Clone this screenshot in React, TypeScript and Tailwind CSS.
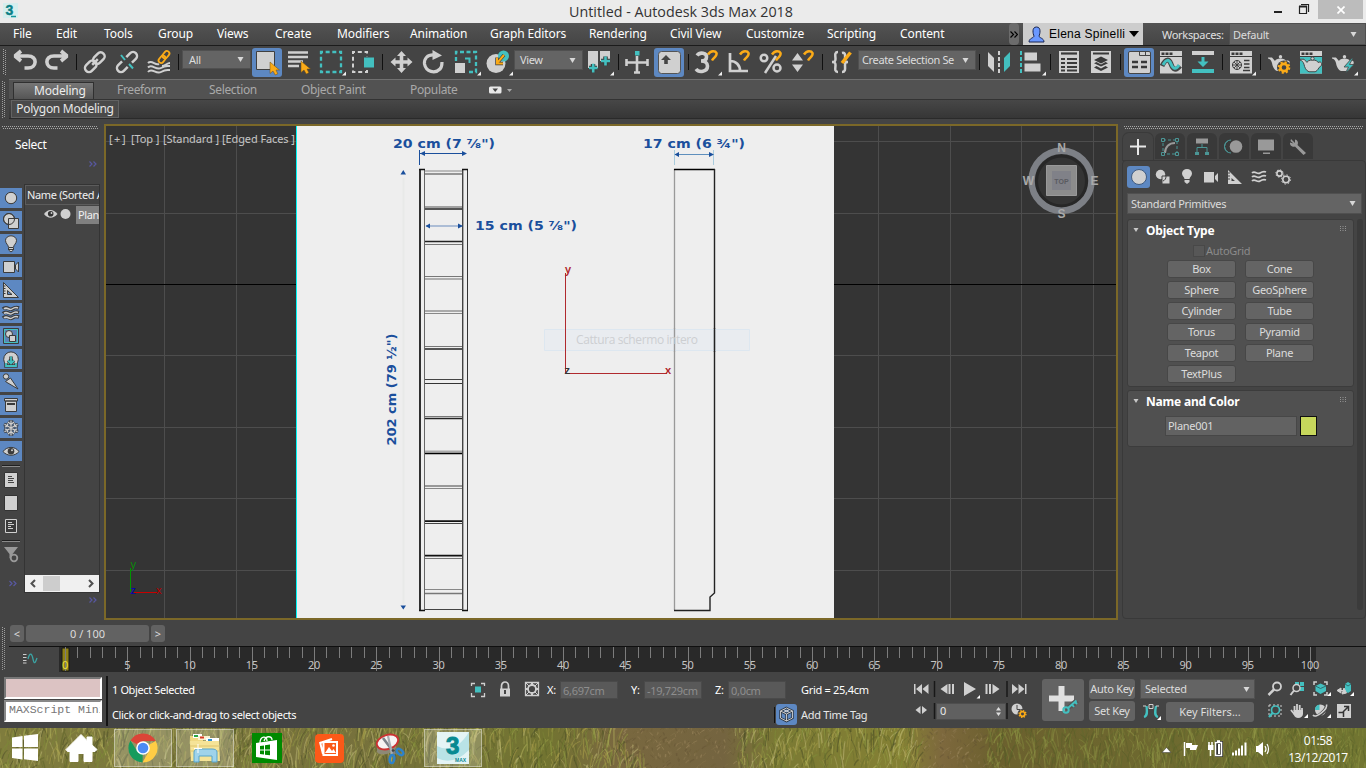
import React from "react";

const L = "#d0d0d0";
const T = "#43c0c0";
const O = "#fbab18";
const D = "#3a3a3a";

type IcoProps = { w?: number; h?: number; children?: React.ReactNode; className?: string };

function Ico({ w = 32, h = 32, children, className = "" }: IcoProps) {
  return (
    <svg width={w} height={h} viewBox={`0 0 ${w} ${h}`} className={`block shrink-0 ${className}`} fill="none">
      {children}
    </svg>
  );
}

function GripV({ h, className = "" }: { h: number; className?: string }) {
  return (
    <Ico w={4} h={h} className={className}>
      <path d={`M0.500 0V${h}`} stroke="#a0a0a0" strokeDasharray="1 1" />
      <path d={`M2.500 1V${h}`} stroke="#a0a0a0" strokeDasharray="1 1" />
    </Ico>
  );
}

function GripH({ w, className = "" }: { w: number; className?: string }) {
  return (
    <Ico w={w} h={3} className={className}>
      <path d={`M0 0.500H${w}`} stroke="#a8a8a8" strokeDasharray="1 1" />
      <path d={`M1 2.500H${w}`} stroke="#a8a8a8" strokeDasharray="1 1" />
    </Ico>
  );
}

function Slot({ children, active = false, corner = false }: { children: React.ReactNode; active?: boolean; corner?: boolean }) {
  return (
    <div className={active ? "mx-px mt-px h-[29px] w-[30px] shrink-0 overflow-hidden rounded-[3px] bg-[#5d88c2]" : "h-[30px] w-8 shrink-0"}>
      <svg width={active ? 30 : 32} height="30" viewBox={active ? "1 2 30 30" : "0 1 32 30"} fill="none" className="block">
        {children}
        {corner && <path d="M31 25.500V29.500H27Z" fill="#f0f0f0" />}
      </svg>
    </div>
  );
}

function Sep({ className = "w-[7px]" }: { className?: string }) {
  return (
    <div className={`mt-[7px] flex shrink-0 justify-center ${className}`}>
      <div className="h-4 w-px bg-[#101010]" />
    </div>
  );
}

function Combo({ text, className = "", pad = "px-1.5" }: { text: string; className?: string; pad?: string }) {
  return (
    <div className={`flex shrink-0 items-center justify-between border border-[#505050] bg-[#646464] text-[#dcdcdc] ${pad} ${className}`}>
      <span className="whitespace-nowrap">{text}</span>
      <Ico w={7} h={5}>
        <path d="M0.500 0H6.500L3.500 5Z" fill="#d8d8d8" />
      </Ico>
    </div>
  );
}

const Cursor = ({ x, y }: { x: number; y: number }) => (
  <path transform={`translate(${x} ${y})`} d="M0 0V11.500L3 9L5.200 13L7.800 11.800L6 8H9.500Z" fill={O} stroke="#6b4d16" strokeWidth=".5" />
);
const Magnet = ({ x, y }: { x: number; y: number }) => (
  <path transform={`translate(${x} ${y})`} d="M1 4.500C4 0 8.500 1 9.500 3C10.500 6 7 7 5 10.500" stroke={O} strokeWidth="2.500" />
);
const Teapot = ({ fill = L, stroke = "none" }: { fill?: string; stroke?: string }) => (
  <g fill={fill} stroke={stroke}>
    <path d="M5 11.500H9L12 15C12.500 11.500 22.500 11.500 23 15C27 13 28.500 18 24 20.500C23 23 21 25 20 25H14C11 24 9.500 20 9 17C8 14 7 13 5 12.500Z" />
    <circle cx="17.500" cy="10.800" r="1.700" />
  </g>
);
const Gear = ({ x, y, s = 1, color = O }: { x: number; y: number; s?: number; color?: string }) => (
  <g transform={`translate(${x} ${y}) scale(${s})`}>
    <circle r="5.300" stroke={color} strokeWidth="2" strokeDasharray="2.100 2.060" />
    <circle r="3.600" stroke={color} strokeWidth="2.600" />
  </g>
);
const Waves = ({ color = L, o = "" }: { color?: string; o?: string }) => (
  <path
    d="M1 4C4 1 6 6 9 4S13 2 15 3M1 8C4 5 6 10 9 8S13 6 15 7M1 12C4 9 6 14 9 12S13 10 15 11"
    stroke={color}
    strokeWidth="1.700"
    transform={o}
  />
);
const WindowHead = () => (
  <g>
    <path d="M5 5H27V27.500H5Z" fill={L} />
    <path d="M6.500 6.500h3v2.500h-3zM10.500 6.500h3v2.500h-3zM14.500 6.500h3v2.500h-3zM5 10h22v1H5z" fill={D} />
  </g>
);

function Toolbar() {
  return (
    <div className="flex h-[33px] items-start bg-[#444] pl-[3px] pt-px text-[11px] tracking-[-0.35px]">
      <GripV h={26} className="mt-[2px] mr-[2px]" />
      <Slot><path d="M12 5L6 10L12 15M6 10H19C29 10 28 22 19 22H15.500" stroke={L} strokeWidth="3.600" strokeLinejoin="bevel" /></Slot>
      <Slot><path d="M20 5L26 10L20 15M26 10H13C3 10 4 22 13 22H16.500" stroke={L} strokeWidth="3.600" strokeLinejoin="bevel" /></Slot>
      <Sep className="w-[6px]" />
      <Slot>
        <g stroke={L} strokeWidth="2.500" transform="rotate(-45 16 16)">
          <rect x="3.500" y="12" width="13" height="8" rx="4" /><rect x="15" y="12" width="13" height="8" rx="4" />
          <path d="M12 16H20" />
        </g>
      </Slot>
      <Slot>
        <g stroke={L} strokeWidth="2.500" transform="rotate(-45 16 16)">
          <path d="M13 12H7.500A4 4 0 0 0 7.500 20H13M19 12H24.500A4 4 0 0 1 24.500 20H19" />
        </g>
        <path d="M10 9L14 14M18 18L22 22.500" stroke={T} strokeWidth="2" />
      </Slot>
      <Slot>
        <path d="M5 17C9 13 12 20 16 18M5 21.500C9 17 13 25 18 22S24 20 27 20M5 26C9 21 13 29 18 26S24 24 27 24M19 20C22 20 24 17 27 17" stroke={L} strokeWidth="2" />
        <g stroke={O} strokeWidth="1.800" transform="rotate(-50 21 11)"><rect x="14" y="8.500" width="8" height="5" rx="2.500" /><rect x="20" y="8.500" width="8" height="5" rx="2.500" /></g>
      </Slot>
      <Sep />
      <Combo text="All" className="mt-[3px] h-[19px] w-[69px]" />
      <Slot active>
        <path d="M5.500 5.500H23.500V23.500H5.500Z" fill={L} stroke="#404040" /><Cursor x={19} y={16} />
      </Slot>
      <Slot>
        <path d="M5 6.500H25M5 11H25M5 15.500H20M5 20H16" stroke={L} strokeWidth="2.500" /><Cursor x={18} y={15} />
      </Slot>
      <Slot corner><path d="M6 6H26V26H6Z" stroke={T} strokeWidth="2.300" strokeDasharray="4 2.650" strokeDashoffset="2" /></Slot>
      <Slot>
        <path d="M6 6H20V26H6Z" stroke={L} strokeWidth="2" strokeDasharray="4 2.800" strokeDashoffset="2" />
        <path d="M16 10.500h12v12H16z" fill="#444" /><path d="M17 11.500h10v10H17z" fill={T} />
      </Slot>
      <Sep />
      <Slot><path d="M15.500 5L20 10H17.300V14.200H21.500V11.500L26.500 16L21.500 20.500V17.800H17.300V22H20L15.500 27L11 22H13.700V17.800H9.500V20.500L4.500 16L9.500 11.500V14.200H13.700V10H11Z" fill={L} /></Slot>
      <Slot>
        <path d="M17 9C9 8 6 13 6.500 18C8 26 17 28 22 23C24 21 24 19 24 16" stroke={L} strokeWidth="3.200" />
        <path d="M14.500 4L24 9.500L14.500 14Z" fill={L} />
      </Slot>
      <Slot corner>
        <path d="M6 15V6H26V26H18" stroke={T} strokeWidth="2.300" strokeDasharray="4 2.500" />
        <path d="M5 17H15V27H5Z" fill={L} /><path d="M15 12.500H19.500V17" stroke={T} strokeWidth="2" />
      </Slot>
      <Slot corner>
        <circle cx="14" cy="17.500" r="9.500" fill={L} /><circle cx="21.500" cy="10" r="5.500" fill={T} />
        <path d="M22 9L16 16M15 11.500V17.500H21" stroke="#3a3a3a" strokeWidth="3.400" /><path d="M22 9L16 16M15 11.500V17.500H21" stroke={O} strokeWidth="2" />
      </Slot>
      <Combo text="View" className="mt-[3px] h-[20px] w-[69px]" pad="pl-[5px] pr-[6px]" />
      <Slot corner>
        <path d="M5 5H15V22H5ZM17 5H27V15H17Z" fill={L} />
        <path d="M6 22H14M10 18V26.500M18 15H27M22.500 10.500V19.500" stroke="#3a3a3a" strokeWidth="4.500" />
        <path d="M6 22H14.500M10.200 17.800V26.500M18 15H27M22.500 10.500V19.500" stroke={T} strokeWidth="2.600" />
      </Slot>
      <Sep className="w-[6px]" />
      <Slot>
        <path d="M16 10V27M5.500 16.500H26.500M5.500 13V20M26.500 13V20M13 26.500H19" stroke={L} strokeWidth="2.600" /><path d="M14 5h4.500v4.500H14z" fill={T} />
      </Slot>
      <Slot active>
        <rect x="5.500" y="5.500" width="22" height="22" rx="3" fill={L} stroke="#555" /><path d="M13 9L18 14H14.800V18H11.200V14H8Z" fill="#454545" />
      </Slot>
      <Sep className="w-[6px]" />
      <Slot corner>
        <path d="M6 9.500C9 5.500 16 7 15.500 11C15.500 14 13 15 10 15C14 15 16.500 17 16.500 20C16.500 26 8 27 5 23" stroke={L} strokeWidth="3.600" /><Magnet x={16} y={4} />
      </Slot>
      <Slot><path d="M7 7V25H25M7 15C13 15 17 19 17 25" stroke={L} strokeWidth="2.700" /><Magnet x={16} y={4} /></Slot>
      <Slot><circle cx="9" cy="12" r="3.300" stroke={L} strokeWidth="2.500" /><circle cx="22" cy="22" r="3.500" stroke={L} strokeWidth="2.500" /><path d="M10 27L21 10" stroke={L} strokeWidth="2.500" /><Magnet x={16} y={4} /></Slot>
      <Slot><path d="M5 14.500L10.500 7L16 14.500ZM5 18.500L10.500 26L16 18.500Z" fill={L} /><Magnet x={16} y={4} /></Slot>
      <Sep />
      <Slot>
        <path d="M12 6C8 6 9.500 10 9.500 13S8 16 6 16C8 16 9.500 16 9.500 19S8 26 12 26M16 7C20 6 19 10 19 13S20 16 22 16C20 16 19 16 19 19S20 26 16 26" stroke={L} strokeWidth="2.500" />
        <path d="M16 17L24.500 6.500" stroke={O} strokeWidth="3.500" />
      </Slot>
      <Combo text="Create Selection Se" className="mt-[3px] h-[20px] w-[118px]" pad="pl-[3px] pr-1.5" />
      <Sep className="w-[7px]" />
      <Slot><path d="M5 6L11 12V26L5 20Z" fill={L} /><path d="M16 5V27" stroke={L} strokeWidth="2" strokeDasharray="4 2" /><path d="M27 6L21 12V26L27 20Z" fill={T} /></Slot>
      <Slot corner><path d="M6 5V27" stroke={T} strokeWidth="2" strokeDasharray="4 2" /><path d="M9.500 6.500H22V14.500H9.500ZM9.500 17.500H25.500V25.500H9.500Z" fill={L} /></Slot>
      <Sep className="w-[6px]" />
      <Slot><path d="M6 5H26V27H6Z" fill={L} /><path d="M8 7.500H24" stroke={D} strokeWidth="2.200" /><path d="M8 13h4M14 13h10M8 17h4M14 17h10M8 21h4M14 21h10M8 24.500h4M14 24.500h10" stroke={D} strokeWidth="1.900" /></Slot>
      <Slot><path d="M6 5H26V27H6Z" fill={L} /><path d="M8 7.500H24" stroke={D} strokeWidth="2" /><path d="M16 10.500L23 14L16 17.500L9 14Z" fill={D} /><path d="M9 17.300L16 20.500L23 17.300L20.500 16L16 18.500L11.500 16ZM9 21.500L16 25L23 21.500L20.500 20L16 22.500L11.500 20Z" fill={D} /></Slot>
      <Sep className="w-[6px]" />
      <Slot active>
        <rect x="5.500" y="5.500" width="22" height="22" rx="1.500" fill={L} stroke="#454545" />
        <path d="M16.500 5.500V9.500H27.500M22.500 5.500V9.500" stroke="#454545" /><path d="M9 16h6M18 16h6M9 21h6M18 21h6" stroke={D} strokeWidth="2.500" />
      </Slot>
      <Slot><WindowHead /><path d="M7 20C11 12 14 13 16 18C18 24 21 25 25 20" stroke="#454545" strokeWidth="5" /><path d="M8 19C11 13 14 13 16 18C18 23 21 24 24 19" stroke={T} strokeWidth="3" /></Slot>
      <Slot><path d="M5 5H27V9H5Z" fill={L} /><path d="M5 23H27V27H5ZM14.500 11H17.500V15.500H21.500L16 21L10.500 15.500H14.500Z" fill={T} /></Slot>
      <Sep className="w-[6px]" />
      <Slot corner>
        <WindowHead /><circle cx="12" cy="19" r="4.500" stroke={D} /><path d="M9 16L15 22M15 16L9 22M12 14.500V23.500M7.500 19H16.500" stroke={D} strokeWidth=".9" /><path d="M19 14.500h5.500M19 18h5.500M19 21.500h5.500M18 24.500h7" stroke={D} strokeWidth="1.500" />
      </Slot>
      <Sep className="w-[6px]" />
      <Slot><Teapot /><circle cx="21" cy="21.500" r="7" fill="#444" /><Gear x={21} y={21.500} /></Slot>
      <Slot><WindowHead /><path d="M5 11H27V27.500H5Z" fill={T} /><g transform="translate(0 2.500) scale(1 .93)"><Teapot stroke="#444" /></g></Slot>
      <Slot corner><Teapot /><path d="M25 12L17 21H21.500L18.500 27L27 18.500H22.500L26 12Z" fill={T} stroke="#444" strokeWidth=".8" /></Slot>
    </div>
  );
}

const menus: [string, string][] = [
  ["File", "w-[43px]"], ["Edit", "w-[48px]"], ["Tools", "w-[54px]"], ["Group", "w-[59px]"], ["Views", "w-[58px]"],
  ["Create", "w-[62px]"], ["Modifiers", "w-[73px]"], ["Animation", "w-[80px]"], ["Graph Editors", "w-[99px]"],
  ["Rendering", "w-[81px]"], ["Civil View", "w-[76px]"], ["Customize", "w-[81px]"], ["Scripting", "w-[73px]"], ["Content", "w-[109px]"],
];

function MenuBar() {
  return (
    <div className="flex h-[23px] items-stretch border-b border-[#1c1c1c] bg-[linear-gradient(#535353,#454545)] pl-[13px] text-[12px] leading-[21px] text-white">
      {menus.map(([m, w]) => (
        <div key={m} className={`shrink-0 whitespace-nowrap tracking-[-0.1px] ${w}`}>{m}</div>
      ))}
      <div className="flex w-[10px] shrink-0 items-center justify-center rounded-sm bg-[#6c6c6c]">
        <Ico w={8} h={7}><path d="M.5 .5L3.500 3.500L.5 6.500M4.500 .5L7.500 3.500L4.500 6.500" stroke="#000" strokeWidth="1.200" /></Ico>
      </div>
      <div className="ml-1 flex w-[120px] shrink-0 items-center gap-1 bg-[#cdcdcd] pl-[5px] font-['Liberation_Sans',sans-serif] text-[12px] text-black">
        <Ico w={17} h={17}>
          <path d="M8.500 1C3.500 1 5 8 6 10C6 12 1 12 1 16H16C16 12 11 12 11 10C12 8 13.500 1 8.500 1Z" fill="#6a98ff" stroke="#182550" />
        </Ico>
        <span className="w-[76px] whitespace-nowrap tracking-[0.25px]">Elena Spinelli</span>
        <Ico w={10} h={6}><path d="M0 0H10L5 6Z" fill="#000" /></Ico>
      </div>
      <div className="w-[86px] shrink-0 pl-[19px] text-[11px] leading-[23px] tracking-[-0.3px] text-[#e0e0e0]">Workspaces:</div>
      <Combo text="Default" className="h-[22px] flex-1 text-[11px] tracking-[-0.25px]" pad="pl-[3px] pr-2" />
    </div>
  );
}

function TitleBar() {
  return (
    <div className="flex h-[23px] items-start bg-[#ebebeb]">
      <Ico w={22} h={22}>
        <rect x="3" y="3" width="15" height="15" fill="#d5eeee" />
        <text x="5.500" y="15" fontFamily="Liberation Sans" fontWeight="700" fontSize="14" fill="#0b8087" stroke="#0b8087" strokeWidth=".4">3</text>
        <path d="M11 16.500h5" stroke="#15959a" strokeWidth="1.500" />
      </Ico>
      <div className="flex-1 pl-[78px] text-center font-['Open_Sans',sans-serif] text-[14.300px] leading-[23px] text-[#333]">Untitled - Autodesk 3ds Max 2018</div>
      <div className="flex h-[19px] w-[104px] items-stretch">
        <Ico w={56} h={19}>
          <path d="M12 12H20" stroke="#222" strokeWidth="2" />
          <path d="M37.500 6.500H44.500V13.500H37.500ZM39 4.500H46.500V12" stroke="#222" strokeWidth="1.200" /><path d="M37 6.500H45" stroke="#222" strokeWidth="2" />
        </Ico>
        <div className="flex w-[45px] items-center justify-center bg-[#bcbcbc]">
          <Ico w={8} h={8}><path d="M.5.500L7.500 7.500M7.500.500L.5 7.500" stroke="#fff" strokeWidth="1.700" /></Ico>
        </div>
      </div>
    </div>
  );
}

function Ribbon() {
  return (
    <div className="flex h-[45px] shrink-0 bg-[#444] pl-[2px]">
      <GripV h={37} className="mt-[2px]" />
      <div className="ml-[3px] flex h-10 flex-1 flex-col border-t border-[#707070]">
        <div className="flex h-5 items-stretch border-b border-[#333] bg-[#525252] pl-1 text-[12px] leading-[20px] tracking-[-0.35px] text-[#a9a9a9]">
          <div className="mt-[2px] w-[81px] border border-b-0 border-[#303030] bg-[linear-gradient(#777,#555)] pl-5 leading-[16px] tracking-[-0.2px] text-[#ececec]">Modeling</div>
          <div className="w-[92px] pl-[23px]">Freeform</div>
          <div className="w-[92px] pl-[23px]">Selection</div>
          <div className="w-[109px] whitespace-nowrap pl-[23px]">Object Paint</div>
          <div className="w-[101px] pl-[23px]">Populate</div>
          <Ico w={26} h={19}>
            <rect x="1" y="6.500" width="12.500" height="7" rx="1.500" fill="#e8e8e8" /><path d="M4.500 8.500H10L7.200 12Z" fill="#444" /><path d="M19 9H24L21.500 12Z" fill="#aaa" />
          </Ico>
        </div>
        <div className="flex h-[19px] border-b border-[#2a2a2a] bg-[linear-gradient(#474747,#363636)] pl-[2px]">
          <div className="flex h-[18px] w-[108px] items-center justify-center whitespace-nowrap border border-[#626262] bg-[#4a4a4a] text-[12px] tracking-[-0.3px] text-[#e6e6e6]">Polygon Modeling</div>
        </div>
      </div>
    </div>
  );
}

const DK = "#3b3b3b";
const sideIcons: React.ReactNode[] = [
  <circle cx="11" cy="10" r="5.700" fill={L} stroke={DK} />,
  <g stroke={DK}><circle cx="9" cy="8" r="5.500" fill={L} /><path d="M8.500 7.500H18.500V17.500H8.500Z" fill={L} /><circle cx="9" cy="8" r="5.500" /></g>,
  <g><path d="M8.500 13.500C8.500 11 5.500 9.500 5.500 6.500A5.500 4.700 0 0 1 16.500 6.500C16.500 9.500 13.500 11 13.500 13.500V16L11 18L8.500 16Z" fill={L} stroke={DK} /><path d="M9 13.500h4M9 15.500h4" stroke={DK} /></g>,
  <path d="M3.500 4.500H14.500V15.500H3.500ZM15.500 8L18.500 5V15L15.500 12Z" fill={L} stroke={DK} />,
  <g><path d="M3.500 2.500V17.500H18.500ZM7.500 10.500V14.500H12Z" fill={L} fillRule="evenodd" stroke={DK} /><path d="M3.500 6h2M3.500 8.500h2M3.500 11h2M3.500 13.500h2" stroke={DK} /></g>,
  <g><path d="M3 6C7 2 9 8 12 6S16 4 19 5M3 10.500C7 6.500 9 12.500 12 10.500S16 8.500 19 9.500M3 15C7 11 9 17 12 15S16 13 19 14" stroke={DK} strokeWidth="3.600" /><path d="M4 6C7 3 9 8 12 6S16 4 18 5M4 10.500C7 7.500 9 12.500 12 10.500S16 8.500 18 9.500M4 15C7 12 9 17 12 15S16 13 18 14" stroke={L} strokeWidth="1.500" /></g>,
  <g><path d="M3.500 2.500H18.500V17.500H3.500Z" stroke={DK} /><path d="M4.500 3.500H17.500V16.500H4.500Z" stroke={T} fill="#5c83b5" /><circle cx="9" cy="8" r="3.500" fill={L} stroke={DK} /><path d="M9.500 9.500h6v6h-6z" fill={L} stroke={DK} /></g>,
  <g><path d="M6 15.500A7.300 7.300 0 1 1 16 15.500" fill={L} stroke={DK} /><path d="M11 7.500V14M8 11.500L11 14.500L14 11.500M6 14V17H16V14" stroke={DK} strokeWidth="3.500" /><path d="M11 7.500V14M8 11.500L11 14.500L14 11.500M6 14V17H16V14" stroke={T} strokeWidth="1.800" /></g>,
  <g fill={L} stroke={DK}><circle cx="6" cy="4.500" r="2.700" /><path d="M5.500 9.500L10.500 6L18 17L7 10.500Z" /></g>,
  <g stroke={DK} fill={L}><path d="M5.500 6H16.500V16.500H5.500ZM4.500 3.500H17.500V6H4.500Z" /><path d="M7 9h8" strokeWidth="2" /></g>,
  <g><path d="M11 2V18M4 6L18 14M18 6L4 14M8 3.500L11 6L14 3.500M8 16.500L11 14L14 16.500M4 9L7 8V5M18 9L15 8V5M4 11L7 12V15M18 11L15 12V15" stroke={DK} strokeWidth="3" opacity=".75" /><path d="M11 2.500V17.500M4.500 6.200L17.500 13.800M17.500 6.200L4.500 13.800M8 4L11 6.500L14 4M8 16L11 13.500L14 16M5 9L7.500 8V5.500M17 9L14.500 8V5.500M5 11L7.500 12V14.500M17 11L14.500 12V14.500" stroke={L} strokeWidth="1.200" /></g>,
  <g><path d="M3 10.500C7 5 15 5 19 10.500C15 15.500 7 15.500 3 10.500Z" fill={L} stroke={DK} /><circle cx="11" cy="10.300" r="3.300" fill={DK} /><circle cx="12" cy="9.300" r="1" fill={L} /></g>,
];

const Chevrons = ({ className = "" }: { className?: string }) => (
  <Ico w={8} h={6} className={className}>
    <path d="M.5 .5L3 3L.5 5.500M4.500 .5L7 3L4.500 5.500" stroke="#5858a0" strokeWidth="1.200" />
  </Ico>
);

function SidePanel() {
  return (
    <div className="flex w-[104px] shrink-0 flex-col bg-[#444]">
      <GripH w={96} className="ml-[2px] mt-[2px]" />
      <div className="h-[25px] pl-[15px] pt-[8px] text-[12px] tracking-[-0.3px] text-white">Select</div>
      <div className="flex h-[30px] justify-end pr-[7px] pt-[7px]"><Chevrons /></div>
      <div className="flex h-[409px]">
        <div className="flex w-6 shrink-0 flex-col pt-1">
          {sideIcons.map((ic, i) => (
            <div key={i} className="mb-[3px] h-5 w-[22px] shrink-0 bg-[#5d88c2]"><Ico w={22} h={20}>{ic}</Ico></div>
          ))}
          <Ico w={24} h={130}>
            <path d="M2 1.500H20" stroke="#202020" /><path d="M2 2.500H20" stroke="#8a8a8a" />
            <path d="M4.500 8.500H17.500V23.500H4.500Z" fill={L} stroke="#333" /><path d="M8 12.500h4M8 14.500h6M8 16.500h5M8 18.500h6" stroke="#444" />
            <path d="M4.500 31.500H17.500V46.500H4.500Z" fill={L} stroke="#333" />
            <path d="M5.500 55.500H16.500V68.500H5.500Z" fill="#3a3a3a" stroke={L} /><path d="M8 58.500h4M8 60.500h6M8 62.500h3M8 64.500h5" stroke={L} />
            <path d="M2 76.500H20" stroke="#202020" /><path d="M2 77.500H20" stroke="#8a8a8a" />
            <path d="M4 83H18L12.500 90V96L9.500 94V90Z" fill="#999" /><circle cx="14" cy="94" r="3.300" fill="#444" stroke="#999" strokeWidth="1.800" />
            <path d="M9.500 117L12 119.500L9.500 122M13.500 117L16 119.500L13.500 122" stroke="#5858a0" strokeWidth="1.200" />
          </Ico>
        </div>
        <div className="flex w-[76px] flex-col overflow-hidden border border-[#343434] text-[11px] tracking-[-0.35px] text-[#f0f0f0]">
          <div className="flex h-5 shrink-0 items-center whitespace-nowrap border border-r-0 border-[#5c5c5c] pl-px">Name (Sorted Ascending)</div>
          <div className="flex h-5 shrink-0 items-center pl-[18px]">
            <Ico w={33} h={20}>
              <path d="M1 9C5 3.500 10 3.500 14.500 9C10 14 5 14 1 9Z" fill={L} /><circle cx="7.700" cy="8.800" r="2.800" fill="#333" /><circle cx="8.500" cy="8" r=".9" fill={L} />
              <circle cx="22.500" cy="9" r="5" fill={L} />
            </Ico>
            <div className="h-[18px] w-6 overflow-hidden bg-[#808080] pl-[2px] leading-[18px]">Plane001</div>
          </div>
          <div className="flex-1" />
          <div className="flex h-[17px] shrink-0 items-center justify-between bg-[#f0f0f0] px-[5px]">
            <Ico w={6} h={9}><path d="M5 1L1.500 4.500L5 8" stroke="#505050" strokeWidth="2" /></Ico>
            <div className="mr-[21px] h-[15px] w-[17px] bg-[#cdcdcd]" />
            <Ico w={6} h={9}><path d="M1 1L4.500 4.500L1 8" stroke="#505050" strokeWidth="2" /></Ico>
          </div>
        </div>
      </div>
      <div className="flex justify-end pr-[7px] pt-[4px]"><Chevrons /></div>
    </div>
  );
}

const rungs: [number, string, number, number, string, number][] = [
  [171, "#888", 1, 174, "#777", 1.5], [207, "#555", 1, 209, "#222", 1.5], [241.500, "#222", 1.5, 244.500, "#777", 1], [276.500, "#777", 1, 279, "#999", 1.5],
  [311, "#aaa", 2, 313.500, "#888", 1], [346.500, "#777", 1, 349, "#222", 1.5], [379.500, "#444", 1, 383.500, "#333", 1], [416.500, "#777", 1, 418.500, "#222", 1.5],
  [451.500, "#aaa", 2, 453.500, "#000", 1.5], [486, "#999", 2, 488.500, "#888", 1], [521.200, "#111", 1.7, 523.500, "#444", 1], [555.700, "#111", 1.7, 558.500, "#777", 1],
  [589.500, "#888", 1, 593.500, "#777", 1.500],
];

function Viewport() {
  const blue = "#1a4f9c";
  return (
    <div className="relative h-[496px] w-[1014px] shrink-0 overflow-hidden border-2 border-[#7b6828] bg-[#343434]">
      <svg width="1010" height="492" viewBox="106 126 1010 492" className="block" fill="none">
        {[164.5, 236.5, 878.5, 950.5, 1021.5, 1093.5].map((x) => <path key={x} d={`M${x} 126V618`} stroke="#4d4d4d" />)}
        {[141.5, 213.5, 355.5, 427.5, 498.5, 570.5].map((y) => <path key={y} d={`M106 ${y}H1116`} stroke="#4d4d4d" />)}
        <path d="M106 284.500H1116" stroke="#000" />
        <path d="M296 126H834V618H296Z" fill="#eee" /><path d="M296.500 126V618" stroke="#00f6f6" />
        <path d="M403.500 178V604" stroke="#e8e9e8" strokeWidth="2" />
        {rungs.map(([a, c, w, b, d, v]) => (
          <g key={a}><path d={`M425 ${a}H463`} stroke={c} strokeWidth={w} /><path d={`M425 ${b}H463`} stroke={d} strokeWidth={v} /></g>
        ))}
        <path d="M420 169V610.500" stroke="#1a1a1a" strokeWidth="1.800" /><path d="M424.500 169V610" stroke="#666" /><path d="M462.700 169V610.500" stroke="#444" strokeWidth="1.400" /><path d="M467.500 169V610" stroke="#333" />
        <path d="M419 169.500H425M462 169.500H468M419 610.500H425M462 610.500H468" stroke="#111" strokeWidth="1.400" /><path d="M425 609.500H463" stroke="#444" />
        <path d="M674.500 169V610" stroke="#999" strokeWidth="1.300" /><path d="M674 169.500H715" stroke="#000" strokeWidth="1.400" /><path d="M714.500 169V593L710 597V610.500H674" stroke="#222" strokeWidth="1.400" />
        <g stroke={blue}><path d="M419.500 150V165M420 153.500H466" /><path d="M426 226H462" stroke="#6b8cbd" /><path d="M674 154.500H714" stroke="#5e8fbd" /><path d="M674.500 150V165M713.500 150V165" stroke="#a9cbdc" /></g>
        <path d="M420 153.500L425 151V156ZM467 153.500L462 151V156ZM425.500 226L430 223.500V228.500ZM463 226L458 223.500V228.500ZM674.500 154.500L679 152V157ZM714 154.500L709 152V157ZM400.500 174.500H406L403.300 170ZM400.500 605.500H406L403.300 609.500Z" fill={blue} />
        <g fontFamily="DejaVu Sans" fontWeight="700" fontSize="12" fill={blue}>
          <text x="393" y="147.500" textLength="102" lengthAdjust="spacingAndGlyphs">20 cm (7 ⅞")</text>
          <text x="643" y="148" textLength="102" lengthAdjust="spacingAndGlyphs">17 cm (6 ¾")</text>
          <text x="475" y="230" textLength="102" lengthAdjust="spacingAndGlyphs">15 cm (5 ⅞")</text>
          <text transform="translate(396 445.500) rotate(-90)" textLength="112" lengthAdjust="spacingAndGlyphs">202 cm (79 ½")</text>
        </g>
        <path d="M544.500 329.500H749.500V350.500H544.500Z" fill="#e6ebf1" fillOpacity=".6" stroke="#dde7f0" />
        <path d="M674.500 328V352" stroke="#999" strokeWidth="1.300" /><path d="M714.500 328V352" stroke="#222" strokeWidth="1.400" />
        <text x="576" y="344" fontFamily="Open Sans" fontSize="12" fill="#cdcfd2" textLength="122">Cattura schermo intero</text>
        <path d="M565.500 273V373.500H667" stroke="#b02a2e" />
        <g fontFamily="Noto Sans" fontSize="11" fontWeight="600"><text x="565" y="273" fill="#b1262b">y</text><text x="665" y="374" fill="#b1262b">x</text><text x="564.500" y="374" fill="#333">z</text></g>
        <path d="M130.500 568V592" stroke="#009400" /><path d="M134 592.500H157" stroke="#c80000" />
        <g fontFamily="Noto Sans" fontSize="11"><text x="130.500" y="568" fill="#0a8a0a">y</text><text x="156" y="594" fill="#b00000">x</text><text x="130.500" y="594" fill="#0000b8">z</text></g>
        <circle cx="1061.500" cy="181" r="25" stroke="#272727" strokeWidth="3" /><circle cx="1061.500" cy="180.700" r="30" stroke="#7d8086" strokeWidth="6.500" />
        <path d="M1046.500 165.500H1076.500V195.500H1046.500Z" fill="#8c8c8c" stroke="#999" /><path d="M1052 171H1071V190H1052Z" fill="#808188" />
        <g fontFamily="Liberation Sans" fontWeight="700" fill="#a9a9a9" textAnchor="middle" fontSize="12"><text x="1061.500" y="152">N</text><text x="1028.500" y="185">W</text><text x="1094.500" y="185">E</text><text x="1061.500" y="218">S</text><text x="1061.500" y="183.500" fontSize="7" fill="#5a5b60">TOP</text></g>
      </svg>
      <div className="absolute left-[3px] top-[5px] flex whitespace-nowrap text-[11px] leading-4 tracking-[-0.1px] text-[#c6c6c6]">
        <span className="w-[22px] tracking-[1.500px]">[+]</span>
        <span className="w-[32px]">[Top ]</span>
        <span className="w-[59px]">[Standard ]</span>
        <span>[Edged Faces ]</span>
      </div>
    </div>
  );
}

const tabs: React.ReactNode[] = [
  <path d="M15 6V22M7 13.500H23" stroke="#e8e8e8" strokeWidth="2" />,
  <g><path d="M8 7H22V21H8Z" stroke="#4b9696" strokeDasharray="3 2" /><path d="M10 20C10 14 14 10 20 10" stroke="#999" strokeWidth="2" /><path d="M6.500 5.500h3v3h-3zM20.500 5.500h3v3h-3zM6.500 19.500h3v3h-3zM20.500 19.500h3v3h-3z" stroke="#4b9696" fill="#3a3a3a" /></g>,
  <g><path d="M9 5.500h12v5H9z" fill="#999" /><path d="M15 11V14M10 20V14.500H20V20" stroke="#4b9696" /><path d="M8 19h4v3H8zM18 19h4v3h-4z" fill="#4b9696" /></g>,
  <g><path d="M12 7A6.500 6.500 0 0 0 12 20M9.500 7.500A6.500 6.500 0 0 0 9.500 19.500" stroke="#4b9696" /><circle cx="17" cy="13.500" r="6.300" fill="#999" /></g>,
  <path d="M7 6.500H23V17.500H7ZM12 19.500h7v1.500h-7z" fill="#999" />,
  <path d="M8 6L12 10V6.500C15 7 15.500 10 14.500 12L23 20L20.500 22L12 13.500C9 14.500 6.500 12 7 9.500L10.500 10.500L7.500 8Z" fill="#999" />,
];
const subIcons: React.ReactNode[] = [
  <circle cx="12" cy="12" r="7.500" fill={L} stroke="#405c80" />,
  <g><circle cx="9.500" cy="9.500" r="4.700" fill={L} /><path d="M11 11H19V19H11Z" fill={L} stroke="#444" /><path d="M12 16C14 15 15 14 15 11" stroke="#444" /></g>,
  <path d="M9.500 14C9.500 12 7 11 7 8.500A5 4.500 0 0 1 17 8.500C17 11 14.500 12 14.500 14ZM9.500 15H14.500V17L12 19L9.500 17Z" fill={L} />,
  <path d="M5 7H15V17.500H5ZM16 11L19 8V17L16 14Z" fill={L} />,
  <g><path d="M5 5V19H19ZM8.500 13V16H12Z" fill={L} fillRule="evenodd" /><path d="M5 8h2M5 11h2M5 14h2" stroke="#444" /></g>,
  <Waves o="translate(4 4)" />,
  <g><circle cx="8.500" cy="8.500" r="2.600" stroke={L} strokeWidth="1.600" /><circle cx="8.500" cy="8.500" r="3.700" stroke={L} strokeDasharray="1.300 1.600" /><circle cx="15" cy="14.500" r="3.200" stroke={L} strokeWidth="1.600" /><circle cx="15" cy="14.500" r="4.600" stroke={L} strokeDasharray="1.500 2.100" /></g>,
];

function RollHead({ title }: { title: string }) {
  return (
    <div className="flex h-[21px] shrink-0 items-center pl-[5px] pr-[7px] text-[12px] font-bold tracking-[-0.2px] text-white">
      <Ico w={7} h={6}><path d="M0.500 0H5.500L3 4Z" fill="#c8c8c8" /></Ico>
      <span className="ml-[6px] flex-1">{title}</span>
      <Ico w={6} h={5} className="mb-1">
        <path d="M0 .5H6M0 2.500H6M0 4.500H6" stroke="#929292" strokeDasharray="1 1.500" />
      </Ico>
    </div>
  );
}

function CommandPanel() {
  const names = ["Box", "Cone", "Sphere", "GeoSphere", "Cylinder", "Tube", "Torus", "Pyramid", "Teapot", "Plane", "TextPlus"];
  return (
    <div className="ml-1 flex w-[244px] shrink-0 flex-col text-[11px] tracking-[-0.3px] text-[#dcdcdc]">
      <GripH w={239} className="ml-[2px] mt-[2px]" />
      <div className="mt-[4px] flex h-[27px] gap-[2px] pl-px">
        {tabs.map((t, i) => (
          <div key={i} className={`w-[30px] shrink-0 rounded-t-md ${i === 0 ? "bg-[#444] shadow-[0_0_0_1px_#3a3a3a]" : "mb-px bg-[#393939]"}`}>
            <Ico w={30} h={26}>{t}</Ico>
          </div>
        ))}
      </div>
      <div className="flex h-[459px] flex-col rounded-sm border border-[#393939] bg-[#444] pl-1">
        <div className="flex h-[32px] shrink-0 items-center">
          {subIcons.map((s, i) => (
            <div key={i} className={`mr-px w-[23px] shrink-0 overflow-hidden ${i === 0 ? "h-[22px] rounded-[3px] bg-[#5d88c2]" : "h-[24px]"}`}>
              <Ico w={24} h={24} className={i === 0 ? "-mt-px" : ""}>{s}</Ico>
            </div>
          ))}
        </div>
        <Combo text="Standard Primitives" className="h-[21px] w-[235px]" pad="pl-[3px] pr-[5px]" />
        <div className="mt-[5px] flex min-h-0 flex-1 gap-[3px] pb-2">
          <div className="flex w-[227px] shrink-0 flex-col gap-[3px]">
            <div className="flex h-[168px] flex-col rounded-[3px] border border-[#3c3c3c] bg-[#505050]">
              <RollHead title="Object Type" />
              <div className="flex h-[19px] items-center pl-[65px] text-[#8b8b8b]">
                <div className="mr-[1px] h-3 w-3 border border-[#484848] bg-[#575757]" />AutoGrid
              </div>
              <div className="grid grid-cols-[69px_69px] gap-x-[9px] gap-y-[3px] pl-[39px]">
                {names.map((n) => (
                  <div key={n} className="flex h-[18px] items-center justify-center rounded-[3px] border border-[#474747] bg-[#646464]">{n}</div>
                ))}
              </div>
            </div>
            <div className="flex h-[57px] flex-col rounded-[3px] border border-[#3c3c3c] bg-[#505050]">
              <RollHead title="Name and Color" />
              <div className="mt-[4px] flex h-5 items-stretch gap-[3px] pl-[37px]">
                <div className="w-[132px] border border-[#474747] bg-[#626262] pl-[2px] leading-[18px]">Plane001</div>
                <div className="w-[17px] border border-[#101010] bg-[#c7d75c]" />
              </div>
            </div>
          </div>
          <div className="w-[6px] rounded-full bg-[#3b3b3b]" />
        </div>
      </div>
    </div>
  );
}

const frameX = (f: number) => 65.500 + f * 12.450;

function Timeline() {
  const btn = "flex h-[17px] items-center justify-center rounded-[3px] bg-[#626262] text-[#dcdcdc]";
  return (
    <div className="flex h-[52px] shrink-0 flex-col bg-[#444] text-[11px]">
      <div className="flex h-[26px] items-start pt-[5px]">
        <div className="ml-[2px] w-[8px]"><GripV h={21} className="mt-[2px]" /></div>
        <div className="flex gap-[2px]">
          <div className={`${btn} w-[14px]`}>&lt;</div>
          <div className={`${btn} w-[123px]`}>0 / 100</div>
          <div className={`${btn} w-[14px]`}>&gt;</div>
        </div>
      </div>
      <svg width="1366" height="26" viewBox="0 646 1366 26" fill="none" className="block">
        <path d="M59 646H1316V672H59Z" fill="#292929" /><path d="M9 646.500H1366" stroke="#101010" />
        <path d="M62 648H69V671H62Z" fill="#8e8116" stroke="#1b1b14" />
        {Array.from({ length: 101 }, (_, f) => (
          <path key={f} d={`M${Math.floor(frameX(f)) + 0.5} 647V${f % 5 ? 658 : 671}`} stroke="#7c7c7c" />
        ))}
        {Array.from({ length: 21 }, (_, i) => (
          <text key={i} x={frameX(i * 5) - 0.500} y="669" textAnchor="middle" fontFamily="Noto Sans" fontSize="11" letterSpacing="-.2" fill={i ? "#c4c4c4" : "#e6df42"}>{i * 5}</text>
        ))}
        <path d="M23 654.500h3.500M23 657.500h3.500M23 660.500h3.500M23 663h3.500" stroke="#ccc" /><path d="M28 659C30 651 32 654 33 659S35 664 37 658" stroke="#3ba3a3" strokeWidth="1.300" />
        <path d="M2.500 647V670M4.500 648V669" stroke="#999" strokeDasharray="1 1" />
      </svg>
    </div>
  );
}

function Field({ label, value, w }: { label: string; value: string; w: string }) {
  return (
    <div className={`flex shrink-0 items-center ${w}`}>
      <span className="w-[13px] text-white">{label}</span>
      <div className="h-[18px] w-[58px] border border-[#4a4a4a] bg-[#595959] pl-[2px] leading-[18px] text-[#8e8e8e]">{value}</div>
    </div>
  );
}

function StatusBar() {
  const key = "flex items-center justify-center rounded-[3px] bg-[#636363] text-[#dedede] whitespace-nowrap";
  return (
    <div className="flex h-[56px] shrink-0 bg-[#444] text-[11px] tracking-[-0.3px] text-[#e8e8e8]">
      <div className="mr-[1px] flex w-[102px] shrink-0 flex-col gap-px pl-1 pt-[5px]">
        <div className="h-[22px] border-2 border-[#777] border-r-white border-b-white bg-[#dcc3c3]" />
        <div className="h-[22px] overflow-hidden whitespace-nowrap border-2 border-[#888] border-r-white border-b-white bg-white pl-[3px] font-['Liberation_Mono',monospace] text-[11.500px] leading-[16px] tracking-normal text-[#777]">MAXScript Mini</div>
      </div>
      <div className="ml-px mt-[4px] h-[50px] w-[4px] border-r-2 border-[#151515]" />
      <div className="flex w-[362px] shrink-0 flex-col gap-[9px] pl-[4px] pt-[10px] leading-4 tracking-[-0.38px] text-white">
        <div>1 Object Selected</div><div>Click or click-and-drag to select objects</div>
      </div>
      <div className="flex w-[441px] shrink-0 flex-col pt-[8px]">
        <div className="flex h-[20px] items-center">
          <Ico w={77} h={20}>
            <path d="M1.500 6V3.500H5M11 3.500H14.500V6M1.500 13V16.500H5M11 16.500H14.500V13" stroke={L} strokeWidth="1.300" /><path d="M5 6.500H11V12.500H5Z" fill={T} />
            <path d="M31.500 9V6A3.500 4 0 0 1 38.500 6V9" stroke={L} strokeWidth="1.700" /><path d="M30 8.500H40V16.500H30Z" fill={L} /><path d="M34 10h2v4h-2z" fill="#444" />
            <path d="M55.500 2.500H68.500V15.500H55.500Z" stroke={L} strokeWidth="1.300" /><circle cx="62" cy="9" r="4" stroke={L} strokeWidth="1.800" /><path d="M55 9h4M65 9h4M62 2v4M62 12v4" stroke={L} strokeWidth="2" /><path d="M56 3L59 6M68 3L65 6M56 15L59 12M68 15L65 12" stroke={L} />
          </Ico>
          <Field label="X:" value="6,697cm" w="w-[84px]" />
          <Field label="Y:" value="-19,729cm" w="w-[84px]" />
          <Field label="Z:" value="0,0cm" w="w-[86px]" />
          <span className="whitespace-nowrap text-white">Grid = 25,4cm</span>
        </div>
        <div className="mt-[4px] flex items-center pl-[304px]">
          <div className="mr-px h-[16px] w-px bg-[#111]" />
          <div className="h-[21px] w-[21px] rounded-[3px] bg-[#5d88c2]">
            <Ico w={21} h={21}><path d="M10.500 4L16.500 7V14L10.500 17L4.500 14V7ZM4.500 7L10.500 10L16.500 7M10.500 10V17" stroke="#303b48" strokeWidth="2.500" /><path d="M10.500 4L16.500 7V14L10.500 17L4.500 14V7ZM4.500 7L10.500 10L16.500 7M10.500 10V17M7.500 5.500L13.500 8.500M13.500 5.500L7.500 8.500" stroke={L} strokeWidth=".9" /></Ico>
          </div>
          <span className="ml-1">Add Time Tag</span>
        </div>
      </div>
      <div className="flex w-[131px] shrink-0 flex-col pt-[7px]">
        <Ico w={131} h={22}>
          <g fill={L}>
            <path d="M3 5h1.500v10H3zM11 5V15L5 10ZM17.500 5V15L11.500 10ZM36.500 5V15L29.500 10ZM37.500 5h2v10h-2zM41 5h2v10h-2zM53 3V17L65 10ZM74.500 5h2v10h-2zM78 5h2v10h-2zM81.500 5V15L88.500 10ZM101 5V15L107 10ZM107.500 5V15L113.500 10ZM114 5h1.500v10H114z" />
            <path d="M69 16V19.500H65.500Z" fill="#fff" />
          </g>
          <path d="M23.500 2V18M96 2V18" stroke="#181818" strokeWidth="1.500" />
        </Ico>
        <div className="flex h-[20px] items-center">
          <Ico w={25} h={20}><path d="M4.500 9L9.500 5V13ZM16 9L11 5V13Z" fill={L} /><path d="M23.500 2V18" stroke="#181818" strokeWidth="1.500" /></Ico>
          <div className="flex h-[17px] w-[70px] items-center justify-between border border-[#4e4e4e] bg-[#606060] pl-[3px] pr-[3px]">0<Ico w={6} h={9}><path d="M0 3.500H5L2.500 0ZM0 5.500H5L2.500 9Z" fill="#ddd" /></Ico></div>
          <Ico w={25} h={20}><path d="M1 2V18" stroke="#181818" strokeWidth="1.500" /><circle cx="11" cy="8" r="5.500" fill={L} /><path d="M11 4V8.500H14" stroke="#444" /><circle cx="16.500" cy="13" r="5" fill="#444" /><Gear x={16.500} y={13} s={0.65} /></Ico>
        </div>
      </div>
      <div className={`${key} mt-[7px] h-[42px] w-[42px] shrink-0`}>
        <Ico w={42} h={42}><path d="M19.500 7V32M7 19.500H32" stroke="#e0e0e0" strokeWidth="6" /><path d="M24 31L34 22M30 25.500L32.500 28M33 22.500L35 25" stroke="#555" strokeWidth="4.500" /><circle cx="24" cy="31" r="2.700" stroke={T} strokeWidth="2" /><path d="M26 29L34.500 21.500M30 25.500L32 28M33 23L35 25" stroke={T} strokeWidth="2" /></Ico>
      </div>
      <div className="ml-[5px] mt-[7px] flex w-[46px] shrink-0 flex-col gap-[2px]">
        <div className={`${key} h-[20px]`}>Auto Key</div><div className={`${key} h-[20px]`}>Set Key</div>
      </div>
      <div className="ml-[5px] mt-[7px] flex w-[115px] shrink-0 flex-col gap-[3px] tracking-[0px]">
        <Combo text="Selected" className="h-[20px] tracking-[-0.2px]" pad="px-1" />
        <div className="flex">
          <Ico w={26} h={20}><path d="M4 15C8 14 7 9 6.500 4M16 4C15 9 14 14 18 15" stroke={T} strokeWidth="2.300" /><path d="M3 4h3M16 4h3M9 2.500h4v4H9z" stroke={L} /><path d="M21 14V18H17Z" fill="#fff" /></Ico>
          <div className={`${key} h-[20px] w-[88px]`}>Key Filters...</div>
        </div>
      </div>
      <Ico w={104} h={56} className="ml-[5px]">
        <circle cx="17" cy="14.500" r="4" stroke={L} strokeWidth="1.800" /><path d="M14 17.500L8.500 23" stroke={L} strokeWidth="2.500" />
        <path d="M35 10h4v4h-4zM40 10h4v4h-4zM40 15h4v4h-4z" fill={T} /><circle cx="36.500" cy="16" r="3.500" fill="#444" stroke={L} strokeWidth="1.500" /><path d="M34 18.500L30.500 23" stroke={L} strokeWidth="2" />
        <g transform="translate(1 0)">
          <path d="M53 13V10H56M63 10H66V13M53 20V23H56M63 23H66V20" stroke={L} strokeWidth="1.500" /><path d="M59.500 11.500L65 14V19L59.500 22L54.500 19V14Z" fill={T} /><path d="M54.500 14L59.500 16.500L65 14" stroke="#2f6f70" /><path d="M70 20V24H66ZM93 20V24H89ZM47 42V46H43ZM70 42V46H66Z" fill="#fff" />
          <path d="M84 12L87 10L90 12V19L87 21L84 19Z" fill={T} /><path d="M76 18.500L80 16V21ZM80 18.500H84M83 16L85.500 21L81 22Z" fill={L} stroke={L} /><path d="M84 12L87 14L90 12" stroke="#2f6f70" />
          <path d="M8 33H20V44H8Z" stroke={L} strokeDasharray="2 2" /><circle cx="14.500" cy="38" r="4" fill="#444" stroke={T} strokeWidth="1.700" /><path d="M11.500 41L8 45" stroke={T} strokeWidth="2.300" />
          <path d="M33.500 39V34M36 39V32M38.700 39V33M41 40V36M30 38L34 43" stroke={L} strokeWidth="1.800" /><path d="M32.500 38H42V42C42 44 40 46 37 46C34 46 33 43 32.500 42Z" fill={L} />
          <circle cx="59.500" cy="38" r="5.500" fill={L} /><path d="M58.500 32.500V38H54A5.500 5.500 0 0 1 58.500 32.500Z" fill={T} /><path d="M53 44C56 47 67 37 65.500 32.500" stroke="#444" strokeWidth="3.500" /><path d="M52 43C55 47 67 37 65.500 32.500" stroke={L} strokeWidth="1.600" />
          <path d="M76 32H90V46H76Z" fill={L} /><path d="M77.500 40.500H82.500V45M82 40L87 35M83 34.500H87.500V39" stroke="#333" strokeWidth="1.500" />
        </g>
      </Ico>
    </div>
  );
}

function grass() {
  let seed = 7;
  const rnd = () => {
    seed = (seed * 16807) % 2147483647;
    return seed / 2147483647;
  };
  const palette = ["#b5b25c", "#949d45", "#5e652a", "#4b4e26", "#c0b878", "#7d8a38", "#a59b48"];
  const dirt = ["#8c7850", "#645434", "#a08a60", "#706039"];
  const right = ["#8a9440", "#4f5a25", "#9aa34e", "#5d6a2c"];
  return Array.from({ length: 3000 }, (_, i) => {
    const x = rnd() * 1366;
    const y = rnd() * 50;
    const isDirt = (x > 600 + y && x < 735) || (x > 918 && x < 985);
    const p = isDirt ? dirt : x > 985 ? right : palette;
    const len = isDirt ? 3 : 5 + rnd() * 16;
    const dx = (rnd() - (x < 1000 ? 0.4 : 0.5)) * (isDirt ? 8 : 15);
    return (
      <path
        key={i}
        d={`M${x.toFixed(1)} ${y.toFixed(1)}q${(dx * 0.2).toFixed(1)} ${(-len * 0.6).toFixed(1)} ${dx.toFixed(1)} ${(-len).toFixed(1)}`}
        stroke={p[Math.floor(rnd() * p.length)]}
        strokeWidth={0.5 + rnd()}
        opacity={x > 985 ? 0.4 : 0.55}
      />
    );
  });
}
const blades = grass();

function Taskbar() {
  const tile = "flex h-[38px] w-[58px] items-center justify-center border border-white/40 bg-white/20";
  return (
    <div className="relative h-[40px] shrink-0 overflow-hidden bg-[#717235]">
      <svg width="1366" height="40" className="absolute inset-0" fill="none">
        <defs>
          <linearGradient id="field">
            <stop offset="0" stopColor="#7f7c3d" /><stop offset=".25" stopColor="#77713d" /><stop offset=".4" stopColor="#727431" /><stop offset=".45" stopColor="#79683f" />
            <stop offset=".53" stopColor="#746440" /><stop offset=".57" stopColor="#7b7a34" /><stop offset=".66" stopColor="#848034" /><stop offset=".69" stopColor="#7d683d" /><stop offset=".73" stopColor="#6b602e" /><stop offset="1" stopColor="#717531" />
          </linearGradient>
        </defs>
        <path d="M0 0H1366V40H0Z" fill="url(#field)" />{blades}
      </svg>
      <div className="relative flex h-10 items-center">
        <Ico w={114} h={40}>
          <path d="M12 9.500L22.500 8V19H12ZM24 7.800L38 6V19H24ZM12 20.500H22.500V31.500L12 30ZM24 20.500H38V33L24 31.300Z" fill="#fff" />
          <path d="M66 21.500L81 6.500L87 12.500V9H92V17L97 21.500L95 23.500H92V33.500H84V25.500H78V33.500H70V23.500H67.500Z" fill="#fff" stroke="#fff" strokeLinejoin="round" />
        </Ico>
        <div className={tile}>
          <svg width="30" height="30" viewBox="0 0 30 30">
            <path d="M15 15L2.500 7.500A14.500 14.500 0 0 1 27.700 8H15Z" fill="#dc4437" /><path d="M15 15L27.700 8A14.500 14.500 0 0 1 14.500 29.500L21 18Z" fill="#ffcd45" /><path d="M15 15L14.500 29.500A14.500 14.500 0 0 1 2.500 7.500L9 18Z" fill="#169b5d" />
            <circle cx="15" cy="15" r="6.800" fill="#fff" /><circle cx="15" cy="15" r="5.300" fill="#4c8bf5" />
          </svg>
        </div>
        <div className={`${tile} ml-1`}>
          <svg width="34" height="32" viewBox="0 0 34 32">
            <path d="M2 4H13L15 7V28H3Z" fill="#f0d982" /><path d="M5 2h9v4H5z" fill="#fff" /><path d="M6 3h4v2H6z" fill="#28a745" /><path d="M10 4h12v4H10z" fill="#faf2d0" /><path d="M12 4.500h4v2h-4z" fill="#d63b2c" /><path d="M18 6h13v4H18z" fill="#fff" /><path d="M20 7h4v2h-4z" fill="#2b8fd0" />
            <path d="M2 9H31L32 29H3Z" fill="#f5e397" /><path d="M2 14H31M2 19H31" stroke="#ddc46d" />
            <path d="M6 30V20C6 18 8 17 10 17H24C27 17 29 18 29 20V30H24V24H11V30Z" fill="#9fd3eb" stroke="#57a5cb" /><path d="M10 12V21M6 16.500H14" stroke="#fff" />
          </svg>
        </div>
        <svg width="30" height="30" viewBox="0 0 30 30" className="ml-[18px]" fill="none">
          <path d="M0 0H30V30H0Z" fill="#008a00" /><path d="M4 10L25 7V27L4 24Z" fill="#fff" /><path d="M8 10C8 3 15 2 15 8M12 8C14 2 20 3 20 7" stroke="#fff" strokeWidth="1.300" /><path d="M8 13L12 12.500V16.500H8ZM13 12.300L18 11.500V16.500H13ZM8 17.500H12V21.500L8 21ZM13 17.500H18V22.300L13 21.700Z" fill="#008a00" />
        </svg>
        <svg width="29" height="29" viewBox="0 0 29 29" className="ml-[33px]" fill="none">
          <rect width="29" height="29" rx="4" fill="#fb5918" /><path d="M5 9L17 5" stroke="#fff" strokeWidth="2" /><path d="M5 8L8 20M8.500 8H22V21H8.500Z" stroke="#fff" strokeWidth="2" /><path d="M10 19L14 13L17 17L18.500 15L21 19Z" fill="#fff" /><circle cx="18.500" cy="11.500" r="1.300" fill="#fff" />
        </svg>
        <svg width="32" height="34" viewBox="0 0 32 34" className="ml-[30px]" fill="none">
          <path d="M3 15V21C5 25 18 24 22 17V12Z" fill="#8d8976" /><ellipse cx="13.500" cy="11" rx="11" ry="7" transform="rotate(-18 13.500 11)" fill="#f6f3f3" stroke="#cb3232" strokeWidth="1.800" />
          <path d="M9 7L21 23" stroke="#7c828a" strokeWidth="2.600" /><path d="M14 5L18 23" stroke="#a8adb3" strokeWidth="2.200" /><circle cx="19" cy="19.500" r="1.300" fill="#444" />
          <ellipse cx="26" cy="21" rx="3.800" ry="2.300" transform="rotate(40 26 21)" stroke="#2f82c8" strokeWidth="2.500" /><ellipse cx="18" cy="28" rx="2.300" ry="4" stroke="#2f82c8" strokeWidth="2.500" transform="rotate(8 18 28)" />
        </svg>
        <div className={`${tile} ml-[18px]`}>
          <svg width="32" height="32" viewBox="0 0 32 32"><path d="M0 0H32V32H0Z" fill="#e4f4f5" /><path d="M0 14Q18 23 32 0V18Q16 34 0 26Z" fill="#b9e3e6" /><text x="9" y="22" fontFamily="Liberation Sans" fontWeight="700" fontSize="24" fill="#078991" stroke="#078991">3</text><text x="18" y="30" fontFamily="Liberation Sans" fontWeight="700" fontSize="5" fill="#078991">MAX</text></svg>
        </div>
        <Ico w={802} h={40}>
          <g transform="translate(-482 0)">
            <path d="M1162 24.500H1171L1166.500 19.500Z" fill="#fff" stroke="#333" strokeWidth=".5" />
            <path d="M1184.500 14V28" stroke="#fff" strokeWidth="1.500" /><path d="M1186 15H1192V17H1198L1196 22H1190V20H1186Z" fill="#fff" />
            <path d="M1216.500 14.500H1221.500V27.500H1216.500Z" fill="#fff" stroke="#333" strokeWidth="3" /><path d="M1215.500 14.500H1221.500V27.500H1215.500ZM1217 13h3" stroke="#fff" strokeWidth="1.500" /><path d="M1209 14v4M1212 14v4M1210.500 22v6" stroke="#fff" strokeWidth="1.500" /><path d="M1208 17h5.500v5h-5.500z" fill="#fff" />
            <path d="M1232 24.500h2v3h-2zM1235 22.500h2v5h-2zM1238 20.500h2v7h-2zM1241 17.500h2v10h-2zM1244.500 14.500h2v13h-2z" fill="#fff" />
            <path d="M1256 18H1258L1263 14V28L1258 24H1256Z" fill="#fff" /><path d="M1265 18Q1267 21 1265 24M1267 16Q1270 21 1267 26" stroke="#fff" strokeWidth="1.200" />
          </g>
        </Ico>
      </div>
      <div className="absolute right-[14px] top-[4px] flex w-[68px] flex-col items-center font-['Open_Sans',sans-serif] text-[12px] leading-[17px] tracking-[-0.4px] text-white">
        <span>01:58</span><span>13/12/2017</span>
      </div>
    </div>
  );
}

export default function App() {
  return (
    <div className="flex h-[768px] w-[1366px] flex-col overflow-hidden bg-[#444] font-['Noto_Sans','Liberation_Sans',sans-serif] leading-4">
      <TitleBar />
      <MenuBar />
      <Toolbar />
      <Ribbon />
      <div className="flex h-[496px] shrink-0">
        <SidePanel />
        <Viewport />
        <CommandPanel />
      </div>
      <Timeline />
      <StatusBar />
      <Taskbar />
    </div>
  );
}
